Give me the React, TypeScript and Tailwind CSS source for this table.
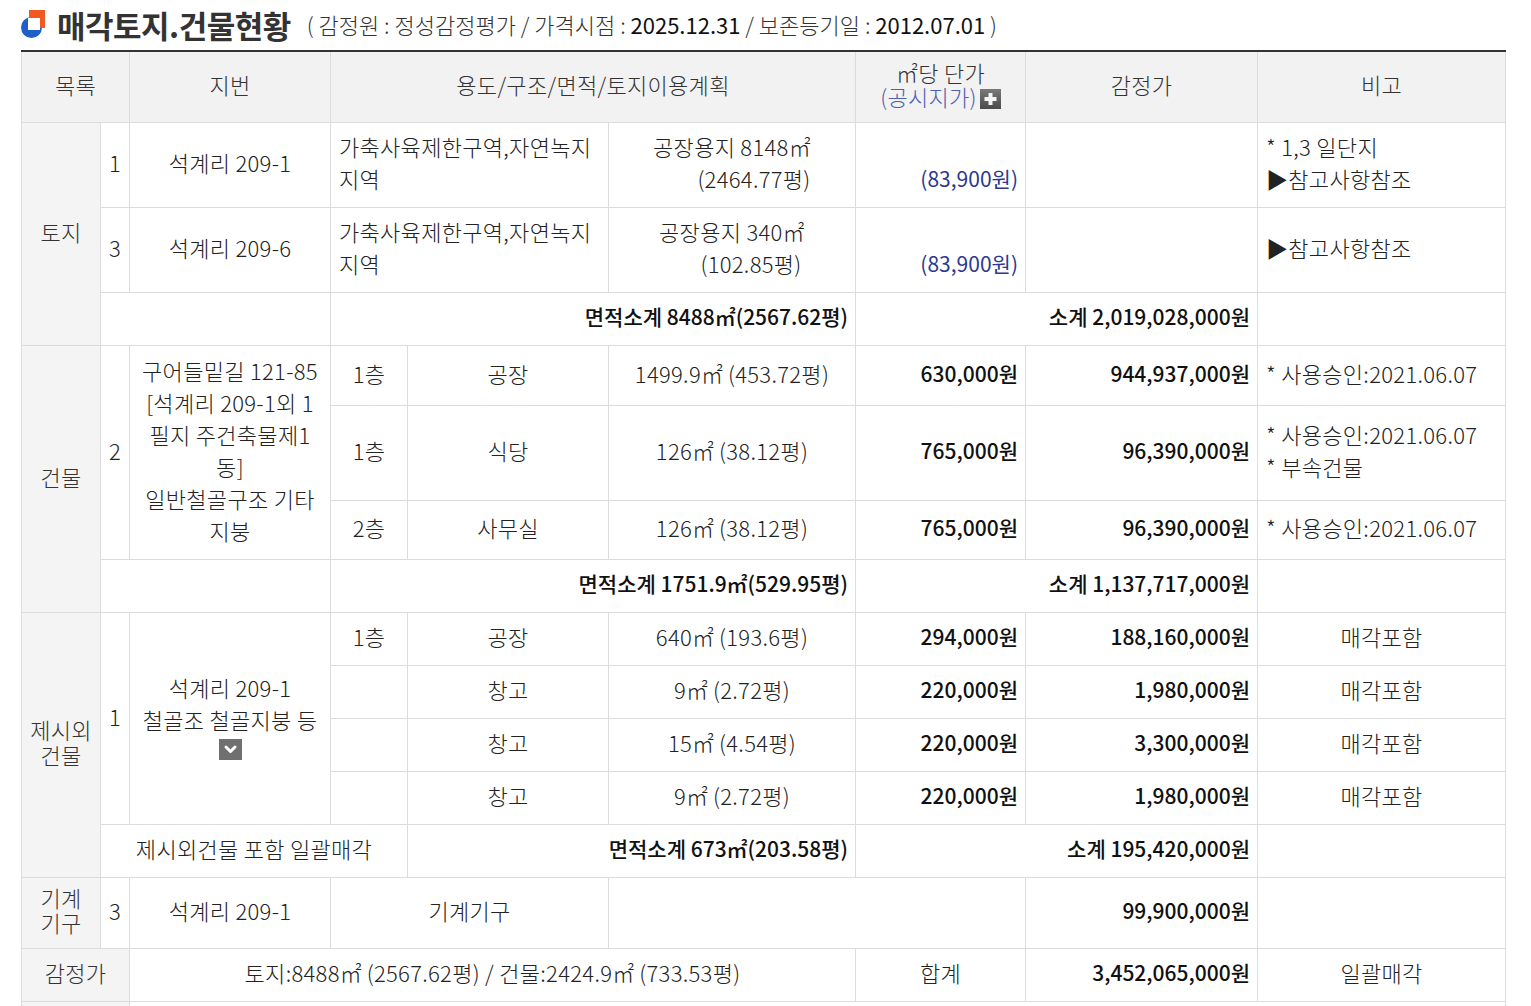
import React from 'react';

const bd = 'border border-[#dcdcdc] pb-[5px]';
const c = `${bd} px-[8px] text-center align-middle`;
const l = `${bd} pl-[8px] pr-[4px] text-left align-middle`;
const r = `${bd} px-[7px] text-right align-middle`;
const n = `${bd} px-0 text-center align-middle`;
const cat = `${bd} bg-[#f4f4f4] text-center align-middle leading-[25px] text-[#333]`;
const strong = 'font-medium text-[#111] text-[21px] tracking-normal';

const Logo = () => (
  <svg width="25" height="28" viewBox="0 0 25 28">
    <circle cx="10.5" cy="17.5" r="10.5" fill="#1f5fc8" />
    <rect x="8" y="0" width="16" height="18" fill="#ef5a24" />
    <rect x="7" y="8" width="12" height="12" fill="#ffffff" />
  </svg>
);

const PlusIcon = () => (
  <svg width="21" height="20" viewBox="0 0 21 20" className="inline-block align-[-3px] ml-[3px]">
    <defs>
      <linearGradient id="pg" x1="0" y1="0" x2="0" y2="1">
        <stop offset="0" stopColor="#7a7a7a" />
        <stop offset="1" stopColor="#4a4a4a" />
      </linearGradient>
    </defs>
    <rect x="0" y="0" width="21" height="20" fill="url(#pg)" />
    <rect x="8.5" y="4" width="4" height="12" fill="#f4f4f4" />
    <rect x="4.5" y="8" width="12" height="4" fill="#f4f4f4" />
  </svg>
);

const ChevronIcon = () => (
  <svg width="23" height="21" viewBox="0 0 23 21" className="inline-block">
    <rect x="0" y="0" width="23" height="21" fill="#707070" />
    <path d="M7 8 L11.5 12.5 L16 8" stroke="#ffffff" strokeWidth="3" fill="none" strokeLinecap="round" strokeLinejoin="round" />
  </svg>
);

export default function App() {
  return (
    <div className="min-h-screen bg-white text-[#222] font-['Noto_Sans_CJK_KR','Noto_Sans',sans-serif]">
      {/* Title */}
      <div className="flex items-center h-[50px] pl-[21px] pb-[2px]">
        <Logo />
        <h2 className="ml-[11px] text-[31px] font-bold text-[#333] leading-none tracking-[-0.5px]">
          매각토지.건물현황
        </h2>
        <span className="ml-[16px] text-[22px] font-light text-[#333]">
          ( 감정원 : 정성감정평가 / 가격시점 : <span className="font-normal text-[#111]">2025.12.31</span> / 보존등기일 :{' '}
          <span className="font-normal text-[#111]">2012.07.01</span> )
        </span>
      </div>

      {/* Table */}
      <table className="ml-[21px] w-[1484px] table-fixed border-collapse text-[22px] leading-[32px] font-light tracking-[0.3px]">
        <colgroup>
          <col className="w-[79px]" />
          <col className="w-[29px]" />
          <col className="w-[201px]" />
          <col className="w-[77px]" />
          <col className="w-[201px]" />
          <col className="w-[247px]" />
          <col className="w-[170px]" />
          <col className="w-[232px]" />
          <col className="w-[248px]" />
        </colgroup>
        <thead>
          <tr className="h-[71px] bg-[#f2f2f2] text-[#333]">
            <th colSpan={2} className={`${c} font-light border-t-2 border-t-[#333]`}>목록</th>
            <th className={`${c} font-light border-t-2 border-t-[#333]`}>지번</th>
            <th colSpan={3} className={`${c} font-light border-t-2 border-t-[#333]`}>용도/구조/면적/토지이용계획</th>
            <th className={`${c} font-light leading-[24px] border-t-2 border-t-[#333]`}>
              <div>㎡당 단가</div>
              <div className="whitespace-nowrap">
                <span className="text-[#4d5fae]">(공시지가)</span>
                <PlusIcon />
              </div>
            </th>
            <th className={`${c} font-light border-t-2 border-t-[#333]`}>감정가</th>
            <th className={`${c} font-light border-t-2 border-t-[#333]`}>비고</th>
          </tr>
        </thead>
        <tbody>
          {/* 토지 */}
          <tr className="h-[85px]">
            <td rowSpan={3} className={cat}>토지</td>
            <td className={n}>1</td>
            <td className={c}>석계리 209-1</td>
            <td colSpan={2} className={`${l} whitespace-nowrap`}>가축사육제한구역,자연녹지<br />지역</td>
            <td className={`${c} whitespace-nowrap`}>
              <div>공장용지 8148㎡</div>
              <div className="pl-[44px]">(2464.77평)</div>
            </td>
            <td className={r}>
              <div>&nbsp;</div>
              <div className="font-normal text-[#2b3990] text-[21px] tracking-normal">(83,900원)</div>
            </td>
            <td className={r}></td>
            <td className={l}>* 1,3 일단지<br />▶참고사항참조</td>
          </tr>
          <tr className="h-[85px]">
            <td className={n}>3</td>
            <td className={c}>석계리 209-6</td>
            <td colSpan={2} className={`${l} whitespace-nowrap`}>가축사육제한구역,자연녹지<br />지역</td>
            <td className={`${c} whitespace-nowrap`}>
              <div>공장용지 340㎡</div>
              <div className="pl-[38px]">(102.85평)</div>
            </td>
            <td className={r}>
              <div>&nbsp;</div>
              <div className="font-normal text-[#2b3990] text-[21px] tracking-normal">(83,900원)</div>
            </td>
            <td className={r}></td>
            <td className={l}>▶참고사항참조</td>
          </tr>
          <tr className="h-[53px]">
            <td colSpan={2} className={c}></td>
            <td colSpan={3} className={`${r} ${strong}`}>면적소계 8488㎡(2567.62평)</td>
            <td colSpan={2} className={`${r} ${strong}`}>소계 2,019,028,000원</td>
            <td className={c}></td>
          </tr>

          {/* 건물 */}
          <tr className="h-[60px]">
            <td rowSpan={4} className={cat}>건물</td>
            <td rowSpan={3} className={n}>2</td>
            <td rowSpan={3} className={`${c} px-[2px]`}>
              <div className="whitespace-nowrap">구어들밑길 121-85</div>
              <div className="whitespace-nowrap">[석계리 209-1외 1</div>
              <div className="whitespace-nowrap">필지 주건축물제1</div>
              <div className="whitespace-nowrap">동]</div>
              <div className="whitespace-nowrap">일반철골구조 기타</div>
              <div className="whitespace-nowrap">지붕</div>
            </td>
            <td className={c}>1층</td>
            <td className={c}>공장</td>
            <td className={`${c} whitespace-nowrap`}>1499.9㎡&thinsp;(453.72평)</td>
            <td className={`${r} ${strong}`}>630,000원</td>
            <td className={`${r} ${strong}`}>944,937,000원</td>
            <td className={`${l} whitespace-nowrap`}>* 사용승인:2021.06.07</td>
          </tr>
          <tr className="h-[95px]">
            <td className={c}>1층</td>
            <td className={c}>식당</td>
            <td className={c}>126㎡&thinsp;(38.12평)</td>
            <td className={`${r} ${strong}`}>765,000원</td>
            <td className={`${r} ${strong}`}>96,390,000원</td>
            <td className={`${l} whitespace-nowrap`}>* 사용승인:2021.06.07<br />* 부속건물</td>
          </tr>
          <tr className="h-[59px]">
            <td className={c}>2층</td>
            <td className={c}>사무실</td>
            <td className={c}>126㎡&thinsp;(38.12평)</td>
            <td className={`${r} ${strong}`}>765,000원</td>
            <td className={`${r} ${strong}`}>96,390,000원</td>
            <td className={`${l} whitespace-nowrap`}>* 사용승인:2021.06.07</td>
          </tr>
          <tr className="h-[53px]">
            <td colSpan={2} className={c}></td>
            <td colSpan={3} className={`${r} ${strong}`}>면적소계 1751.9㎡(529.95평)</td>
            <td colSpan={2} className={`${r} ${strong}`}>소계 1,137,717,000원</td>
            <td className={c}></td>
          </tr>

          {/* 제시외 건물 */}
          <tr className="h-[53px]">
            <td rowSpan={5} className={cat}>제시외<br />건물</td>
            <td rowSpan={4} className={n}>1</td>
            <td rowSpan={4} className={`${c} px-[2px]`}>
              <div className="whitespace-nowrap">석계리 209-1</div>
              <div className="whitespace-nowrap">철골조 철골지붕 등</div>
              <div className="leading-none">
                <ChevronIcon />
              </div>
            </td>
            <td className={c}>1층</td>
            <td className={c}>공장</td>
            <td className={c}>640㎡&thinsp;(193.6평)</td>
            <td className={`${r} ${strong}`}>294,000원</td>
            <td className={`${r} ${strong}`}>188,160,000원</td>
            <td className={c}>매각포함</td>
          </tr>
          <tr className="h-[53px]">
            <td className={c}></td>
            <td className={c}>창고</td>
            <td className={c}>9㎡&thinsp;(2.72평)</td>
            <td className={`${r} ${strong}`}>220,000원</td>
            <td className={`${r} ${strong}`}>1,980,000원</td>
            <td className={c}>매각포함</td>
          </tr>
          <tr className="h-[53px]">
            <td className={c}></td>
            <td className={c}>창고</td>
            <td className={c}>15㎡&thinsp;(4.54평)</td>
            <td className={`${r} ${strong}`}>220,000원</td>
            <td className={`${r} ${strong}`}>3,300,000원</td>
            <td className={c}>매각포함</td>
          </tr>
          <tr className="h-[53px]">
            <td className={c}></td>
            <td className={c}>창고</td>
            <td className={c}>9㎡&thinsp;(2.72평)</td>
            <td className={`${r} ${strong}`}>220,000원</td>
            <td className={`${r} ${strong}`}>1,980,000원</td>
            <td className={c}>매각포함</td>
          </tr>
          <tr className="h-[53px]">
            <td colSpan={3} className={`${c} whitespace-nowrap`}>제시외건물 포함 일괄매각</td>
            <td colSpan={2} className={`${r} ${strong}`}>면적소계 673㎡(203.58평)</td>
            <td colSpan={2} className={`${r} ${strong}`}>소계 195,420,000원</td>
            <td className={c}></td>
          </tr>

          {/* 기계기구 */}
          <tr className="h-[71px]">
            <td className={cat}>기계<br />기구</td>
            <td className={n}>3</td>
            <td className={c}>석계리 209-1</td>
            <td colSpan={2} className={c}>기계기구</td>
            <td colSpan={2} className={c}></td>
            <td className={`${r} ${strong}`}>99,900,000원</td>
            <td className={c}></td>
          </tr>

          {/* 감정가 합계 */}
          <tr className="h-[53px]">
            <td colSpan={2} className={`${cat} leading-[32px]`}>감정가</td>
            <td colSpan={4} className={`${c} whitespace-nowrap`}>
              토지:8488㎡&thinsp;(2567.62평) / 건물:2424.9㎡&thinsp;(733.53평)
            </td>
            <td className={c}>합계</td>
            <td className={`${r} ${strong}`}>3,452,065,000원</td>
            <td className={c}>일괄매각</td>
          </tr>
          <tr className="h-[53px]">
            <td colSpan={2} className={cat}></td>
            <td colSpan={7} className={c}></td>
          </tr>
        </tbody>
      </table>
    </div>
  );
}
